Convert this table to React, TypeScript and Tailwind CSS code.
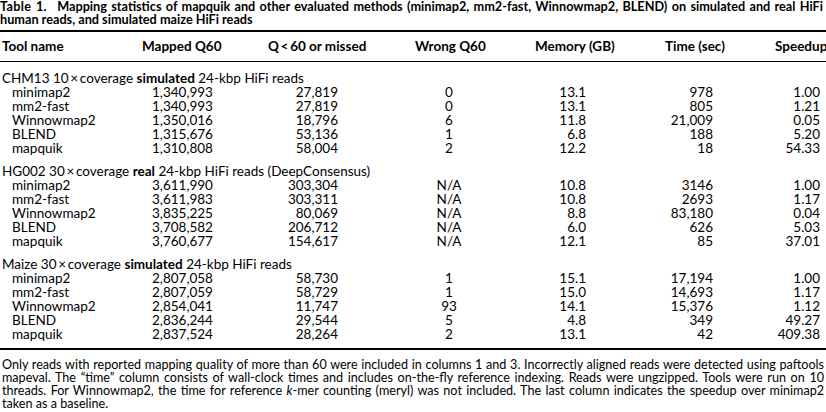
import React from "react";

type Row = [string, string, string, string, string, string, string];

interface Section {
  heading: React.ReactNode;
  rows: Row[];
}

const sections: Section[] = [
  {
    heading: (
      <>
        CHM13 10{"\u2009×\u2009"}coverage <b>simulated</b> 24-kbp HiFi reads
      </>
    ),
    rows: [
      ["minimap2", "1,340,993", "27,819", "0", "13.1", "978", "1.00"],
      ["mm2-fast", "1,340,993", "27,819", "0", "13.1", "805", "1.21"],
      ["Winnowmap2", "1,350,016", "18,796", "6", "11.8", "21,009", "0.05"],
      ["BLEND", "1,315,676", "53,136", "1", "6.8", "188", "5.20"],
      ["mapquik", "1,310,808", "58,004", "2", "12.2", "18", "54.33"],
    ],
  },
  {
    heading: (
      <>
        HG002 30{"\u2009×\u2009"}coverage <b>real</b> 24-kbp HiFi reads (DeepConsensus)
      </>
    ),
    rows: [
      ["minimap2", "3,611,990", "303,304", "N/A", "10.8", "3146", "1.00"],
      ["mm2-fast", "3,611,983", "303,311", "N/A", "10.8", "2693", "1.17"],
      ["Winnowmap2", "3,835,225", "80,069", "N/A", "8.8", "83,180", "0.04"],
      ["BLEND", "3,708,582", "206,712", "N/A", "6.0", "626", "5.03"],
      ["mapquik", "3,760,677", "154,617", "N/A", "12.1", "85", "37.01"],
    ],
  },
  {
    heading: (
      <>
        Maize 30{"\u2009×\u2009"}coverage <b>simulated</b> 24-kbp HiFi reads
      </>
    ),
    rows: [
      ["minimap2", "2,807,058", "58,730", "1", "15.1", "17,194", "1.00"],
      ["mm2-fast", "2,807,059", "58,729", "1", "15.0", "14,693", "1.17"],
      ["Winnowmap2", "2,854,041", "11,747", "93", "14.1", "15,376", "1.12"],
      ["BLEND", "2,836,244", "29,544", "5", "4.8", "349", "49.27"],
      ["mapquik", "2,837,524", "28,264", "2", "13.1", "42", "409.38"],
    ],
  },
];

const cols = "grid grid-cols-[142px_126px_147px_120px_130px_110px_51px]";

function DataRow({ row }: { row: Row }) {
  const [name, mapped, missed, wrong, mem, time, speed] = row;
  return (
    <div className={`${cols} h-[14px] leading-[14px]`}>
      <div className="pl-[12px]">{name}</div>
      <div className="pl-[10px]">{mapped}</div>
      <div className="pr-[77px] text-right">{missed}</div>
      <div className="w-[68px] text-center">{wrong}</div>
      <div className="pr-[79px] text-right">{mem}</div>
      <div className="pr-[62px] text-right">{time}</div>
      <div className="pr-[6px] text-right">{speed}</div>
    </div>
  );
}

export default function App() {
  return (
    <div className="h-[412px] w-[826px] overflow-hidden bg-white text-[13.5px] text-black font-['Lato','Liberation_Sans',sans-serif]">
      {/* caption */}
      <div className="text-[12.7px] font-bold leading-[13px]">
        <div className="pr-[3px] text-justify whitespace-nowrap [text-align-last:justify]">
          <span className="mr-[6px] tracking-[0.3px]">Table 1.</span> Mapping statistics of mapquik and other evaluated
          methods (minimap2, mm2-fast, Winnowmap2, BLEND) on simulated and real HiFi
        </div>
        <div>human reads, and simulated maize HiFi reads</div>
      </div>

      <div className="mt-[4px] h-[2px] bg-black" />

      <div className={`${cols} h-[29px] items-center font-bold`}>
        <div className="pl-[2px]">Tool name</div>
        <div>Mapped Q60</div>
        <div>Q{"\u2009<\u2009"}60 or missed</div>
        <div>Wrong Q60</div>
        <div>Memory (GB)</div>
        <div>Time (sec)</div>
        <div className="whitespace-nowrap">Speedup</div>
      </div>

      <div className="h-px bg-black" />

      <div className="flex flex-col gap-[9px] pt-[9px] pb-[7px]">
        {sections.map((s, i) => (
          <div key={i}>
            <div className="h-[14px] pl-[2px] leading-[14px]">{s.heading}</div>
            {s.rows.map((r) => (
              <DataRow key={r[0]} row={r} />
            ))}
          </div>
        ))}
      </div>

      <div className="h-[2px] bg-black" />

      {/* footnote */}
      <div className="pt-[8px] pl-[2px] pr-[2px] text-[12.6px] leading-[13px]">
        <div className="text-justify whitespace-nowrap [text-align-last:justify]">
          Only reads with reported mapping quality of more than 60 were included in columns 1 and 3. Incorrectly
          aligned reads were detected using paftools
        </div>
        <div className="text-justify whitespace-nowrap [text-align-last:justify]">
          mapeval. The “time” column consists of wall-clock times and includes on-the-fly reference indexing. Reads
          were ungzipped. Tools were run on 10
        </div>
        <div className="text-justify whitespace-nowrap [text-align-last:justify]">
          threads. For Winnowmap2, the time for reference <i>k</i>-mer counting (meryl) was not included. The last
          column indicates the speedup over minimap2
        </div>
        <div>taken as a baseline.</div>
      </div>
    </div>
  );
}
